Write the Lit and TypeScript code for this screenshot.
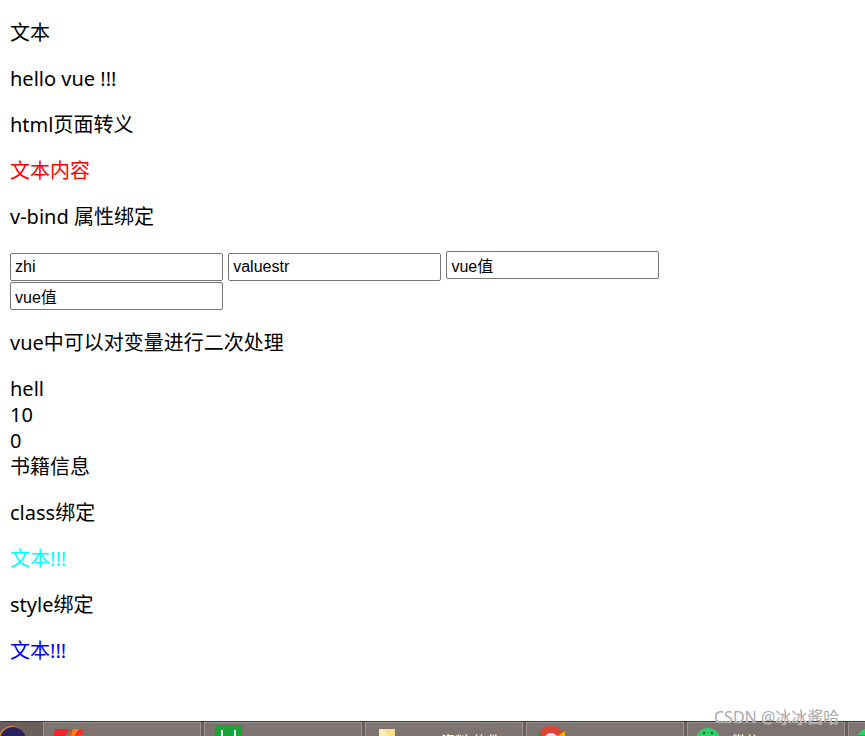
import { LitElement, css, html } from 'lit'
import { customElement } from 'lit/decorators.js'

@customElement('app-root')
export class AppRoot extends LitElement {
  protected render() {
    return html`
      <main class="content">
        <p>文本</p>
        <p>hello vue !!!</p>
        <p>html页面转义</p>
        <p class="red">文本内容</p>
        <p>v-bind 属性绑定</p>
        <p class="inputs">
          <input value="zhi" />
          <input value="valuestr" />
          <input value="vue值" />
          <input value="vue值" />
        </p>
        <p>vue中可以对变量进行二次处理</p>
        <div>hell</div>
        <div>10</div>
        <div>0</div>
        <div>书籍信息</div>
        <p>class绑定</p>
        <p class="cyan">文本!!!</p>
        <p>style绑定</p>
        <p class="blue">文本!!!</p>
      </main>
      <footer class="taskbar">
        <div class="start"><span class="orb"></span></div>
        <div class="task">
          <svg class="icon" width="32" height="15" viewBox="0 0 32 15">
            <path d="M1 8 L3 0 H17 L13 7 H8 L7 15 H1 Z" fill="#f5222a" />
            <path d="M19 0 H32 L30 6 H25 L23 15 H15 Z" fill="#f5301f" />
            <path d="M21 0 H27 L21 9 H17 Z" fill="#ff7a1a" />
          </svg>
          <span class="label dot">.</span>
        </div>
        <div class="task">
          <svg class="icon green" width="27" height="11" viewBox="0 0 27 11">
            <rect width="27" height="11" fill="#1ba23a" />
            <rect x="6" y="5" width="2" height="6" fill="#e8f5ea" />
            <rect x="19" y="5" width="2" height="6" fill="#e8f5ea" />
          </svg>
        </div>
        <div class="task">
          <svg class="icon folder" width="16" height="7" viewBox="0 0 16 7">
            <rect width="16" height="7" fill="#f7dc8b" />
            <path d="M0 0 H6 L10 7 H0 Z" fill="#fbe9ae" />
          </svg>
          <span class="label folder-label">资料 软件</span>
        </div>
        <div class="task">
          <svg class="icon chrome" width="28" height="10" viewBox="0 0 28 10">
            <circle cx="14" cy="14" r="14" fill="#db4437" />
            <path d="M14 14 L28 5 V10 H14 Z" fill="#f4b400" />
            <path d="M0 10 L2 7 L5 10 Z" fill="#0f9d58" />
            <circle cx="14" cy="14" r="7" fill="#dfe3ee" />
          </svg>
        </div>
        <div class="task">
          <svg class="icon wechat" width="24" height="8" viewBox="0 0 24 8">
            <circle cx="12" cy="12" r="12" fill="#2ed168" />
            <circle cx="8" cy="5" r="1.3" fill="#12793a" />
            <circle cx="16" cy="5" r="1.3" fill="#12793a" />
          </svg>
          <span class="label wechat-label">微信</span>
        </div>
        <div class="task last">
          <svg class="icon wechat" width="24" height="7" viewBox="0 0 24 7">
            <circle cx="12" cy="12" r="12" fill="#2ed168" />
          </svg>
        </div>
      </footer>
      <div class="watermark">CSDN @冰冰酱哈</div>
    `
  }

  static styles = css`
    :host {
      display: flex;
      flex-direction: column;
      position: relative;
      height: 736px;
      overflow: hidden;
      background: #fff;
      color: #000;
      font-family: 'Noto Sans', 'Noto Sans CJK SC', sans-serif;
      font-size: 20px;
      line-height: 26px;
    }

    .content {
      flex: 1;
      padding: 0 0 0 10px;
    }

    p {
      margin: 20px 0;
    }

    .red {
      color: #f00;
    }

    .cyan {
      color: #0ff;
    }

    .blue {
      color: #00f;
    }

    .inputs {
      line-height: 29px;
    }

    input {
      width: 213px;
      height: 28px;
      box-sizing: border-box;
      border: 1px solid #767676;
      border-radius: 2px;
      padding: 1px 4px;
      margin: 0;
      font: 16px 'Liberation Sans', 'Noto Sans CJK SC', sans-serif;
      color: #000;
      background: #fff;
    }

    .taskbar {
      display: flex;
      flex: none;
      gap: 3px;
      height: 15px;
      overflow: hidden;
      background: #6b5f5c;
      border-top: 1px solid #3d3938;
      box-sizing: border-box;
    }

    .start {
      flex: none;
      width: 40px;
    }

    .orb {
      display: block;
      width: 26px;
      height: 26px;
      margin: 5px 0 0 0;
      border-radius: 50%;
      background: #2a2160;
      box-shadow: -1px -1px 0 #d98a2b;
    }

    .task {
      display: flex;
      flex: none;
      align-items: flex-start;
      width: 158px;
      box-sizing: border-box;
      border: 1px solid #9a9390;
      border-bottom: none;
      background: #7d7370;
    }

    .task.last {
      width: 40px;
    }

    .icon {
      display: block;
      flex: none;
      margin: 6px 0 0 8px;
    }

    .icon.green {
      margin: 2px 0 0 10px;
    }

    .icon.folder {
      margin: 6px 0 0 13px;
    }

    .icon.chrome {
      margin: 3px 0 0 10px;
    }

    .icon.wechat {
      margin: 5px 0 0 8px;
    }

    .label {
      color: #fff;
      font-size: 14px;
      line-height: 20px;
      margin-top: 8px;
    }

    .dot {
      margin-left: 48px;
    }

    .folder-label {
      margin-left: 46px;
    }

    .wechat-label {
      margin-left: 12px;
    }

    .watermark {
      position: absolute;
      left: 714px;
      top: 707px;
      font-size: 16px;
      line-height: 20px;
      color: #a9a9a9;
      text-shadow: 0 0 1px #fff;
      white-space: nowrap;
    }
  `
}

declare global {
  interface HTMLElementTagNameMap {
    'app-root': AppRoot
  }
}
